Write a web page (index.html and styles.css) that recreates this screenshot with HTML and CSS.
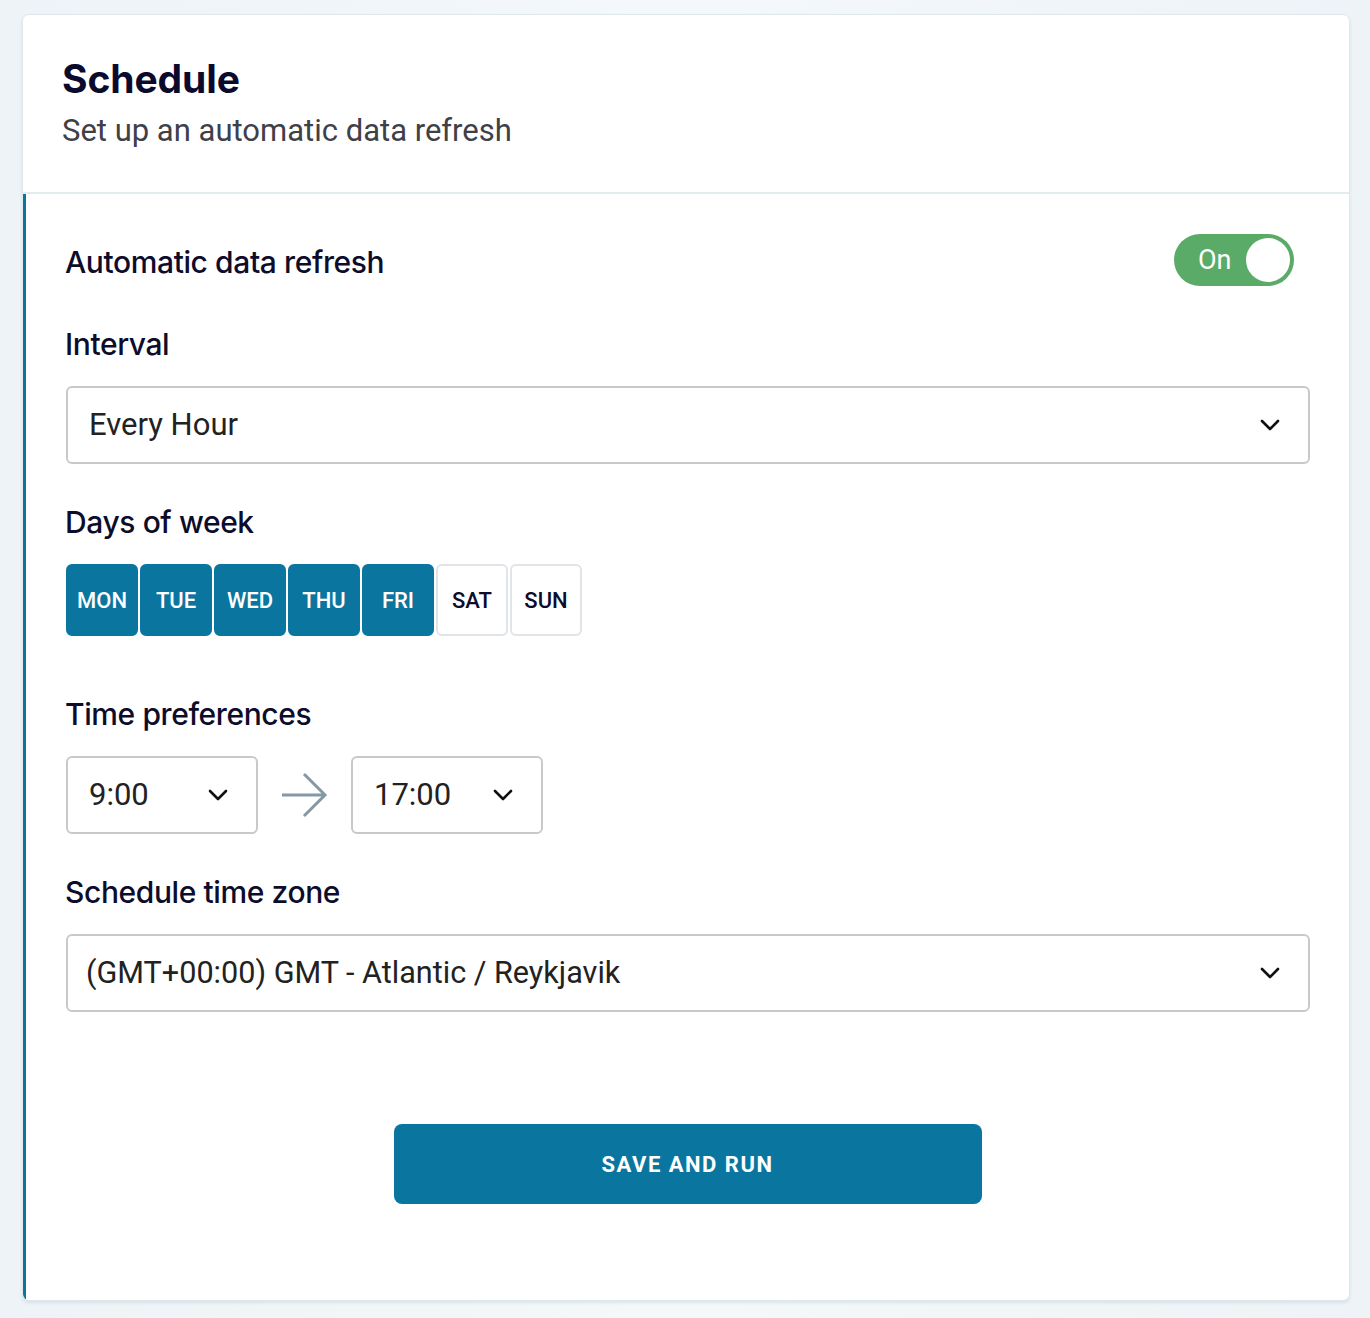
FILE: index.html
```html
<!DOCTYPE html>
<html lang="en">
<head>
<meta charset="utf-8">
<title>Schedule</title>
<link rel="stylesheet" href="styles.css">
</head>
<body>
<div class="card">
  <header class="card-header">
    <h1 class="title">Schedule</h1>
    <p class="subtitle">Set up an automatic data refresh</p>
  </header>
  <section class="card-body">
    <div class="row-toggle">
      <span class="label">Automatic data refresh</span>
      <div class="toggle"><span class="toggle-text">On</span><span class="knob"></span></div>
    </div>

    <div class="label label-block">Interval</div>
    <div class="select select-wide">
      <span class="select-value">Every Hour</span>
      <svg class="chev" width="20" height="12" viewBox="0 0 20 12"><path d="M2 2 L10 10 L18 2" fill="none" stroke="#111" stroke-width="2.6" stroke-linecap="round" stroke-linejoin="round"/></svg>
    </div>

    <div class="label label-block">Days of week</div>
    <div class="days">
      <span class="day on">MON</span>
      <span class="day on">TUE</span>
      <span class="day on">WED</span>
      <span class="day on">THU</span>
      <span class="day on">FRI</span>
      <span class="day">SAT</span>
      <span class="day">SUN</span>
    </div>

    <div class="label label-block label-time">Time preferences</div>
    <div class="times">
      <div class="select select-time">
        <span class="select-value">9:00</span>
        <svg class="chev" width="20" height="12" viewBox="0 0 20 12"><path d="M2 2 L10 10 L18 2" fill="none" stroke="#111" stroke-width="2.6" stroke-linecap="round" stroke-linejoin="round"/></svg>
      </div>
      <svg class="arrow" width="48" height="48" viewBox="0 0 48 48"><path d="M2 24 H45 M24 3 L45 24 L24 45" fill="none" stroke="#8599a3" stroke-width="3"/></svg>
      <div class="select select-time">
        <span class="select-value">17:00</span>
        <svg class="chev" width="20" height="12" viewBox="0 0 20 12"><path d="M2 2 L10 10 L18 2" fill="none" stroke="#111" stroke-width="2.6" stroke-linecap="round" stroke-linejoin="round"/></svg>
      </div>
    </div>

    <div class="label label-block">Schedule time zone</div>
    <div class="select select-wide">
      <span class="select-value tz">(GMT+00:00) GMT - Atlantic / Reykjavik</span>
      <svg class="chev" width="20" height="12" viewBox="0 0 20 12"><path d="M2 2 L10 10 L18 2" fill="none" stroke="#111" stroke-width="2.6" stroke-linecap="round" stroke-linejoin="round"/></svg>
    </div>

    <div class="actions">
      <button class="btn">SAVE AND RUN</button>
    </div>
  </section>
</div>
</body>
</html>
```
FILE: styles.css
```css
html, body {
  margin: 0;
  padding: 0;
}
body {
  background: linear-gradient(90deg, #edf3f6 0%, #f4f8fa 50%, #edf3f6 100%);
  padding: 14px 20px 17px 22px;
  font-family: Roboto, "Liberation Sans", sans-serif;
  color: #0d0c2b;
}
.card {
  background: #fff;
  border: 1px solid #dfe8ed;
  border-radius: 7px;
  box-shadow: 0 2px 3px rgba(150, 175, 190, 0.25);
  overflow: hidden;
}
.card-header {
  padding: 42px 40px 0 39px;
  height: 135px;
  border-bottom: 2px solid #e3ebef;
}
.title {
  margin: 0;
  font-family: Inter, "Noto Sans", sans-serif;
  font-weight: 700;
  font-size: 39px;
  line-height: 44px;
  letter-spacing: -0.1px;
  color: #0b0a2c;
}
.subtitle {
  margin: 12px 0 0;
  font-size: 31px;
  line-height: 36px;
  color: #404048;
  font-weight: 400;
}
.card-body {
  border-left: 3px solid #0a76a0;
  padding: 40px 39px 96px 39px;
}
.row-toggle {
  display: flex;
  justify-content: space-between;
  align-items: center;
  height: 52px;
  padding-right: 16px;
}
.label {
  font-family: Inter, "Noto Sans", sans-serif;
  font-weight: 500;
  font-size: 30px;
  line-height: 36px;
  letter-spacing: -0.4px;
  color: #0d0c2b;
}
.row-toggle .label {
  position: relative;
  top: 2px;
}
.label-block {
  margin-top: 40px;
  margin-bottom: 24px;
}
.label-time {
  margin-top: 60px;
}
.toggle {
  width: 120px;
  height: 52px;
  border-radius: 26px;
  background: #5aaa68;
  box-sizing: border-box;
  display: flex;
  align-items: center;
  justify-content: space-between;
  padding: 0 4px 0 24px;
}
.toggle-text {
  color: #fff;
  font-size: 27px;
  line-height: 30px;
}
.knob {
  width: 44px;
  height: 44px;
  border-radius: 50%;
  background: #fff;
}
.select {
  box-sizing: border-box;
  height: 78px;
  border: 2px solid #c9c9c9;
  border-radius: 6px;
  display: flex;
  align-items: center;
  justify-content: space-between;
  padding: 0 28px 0 21px;
  background: #fff;
  margin-left: 1px;
}
.select-value {
  font-size: 31px;
  color: #222;
  line-height: 36px;
}
.select-value.tz {
  margin-left: -3px;
  font-size: 30.6px;
}
.select-time {
  width: 192px;
}
.chev {
  display: block;
}
.days {
  display: flex;
  gap: 2px;
  margin-left: 1px;
}
.day {
  box-sizing: border-box;
  width: 72px;
  height: 72px;
  border-radius: 6px;
  border: 2px solid #e1e4e8;
  display: flex;
  align-items: center;
  justify-content: center;
  font-size: 22px;
  font-weight: 500;
  color: #0d0c2b;
  background: #fff;
}
.day.on {
  background: #0a76a0;
  border-color: #0a76a0;
  color: #fff;
}
.times {
  display: flex;
  align-items: center;
  gap: 22px;
}
.arrow {
  display: block;
}
.actions {
  display: flex;
  justify-content: center;
  margin-top: 112px;
}
.btn {
  width: 588px;
  height: 80px;
  border: none;
  border-radius: 8px;
  background: #0a76a0;
  color: #fff;
  font-family: Roboto, "Liberation Sans", sans-serif;
  font-weight: 700;
  font-size: 22px;
  letter-spacing: 1.5px;
  cursor: pointer;
}
```
